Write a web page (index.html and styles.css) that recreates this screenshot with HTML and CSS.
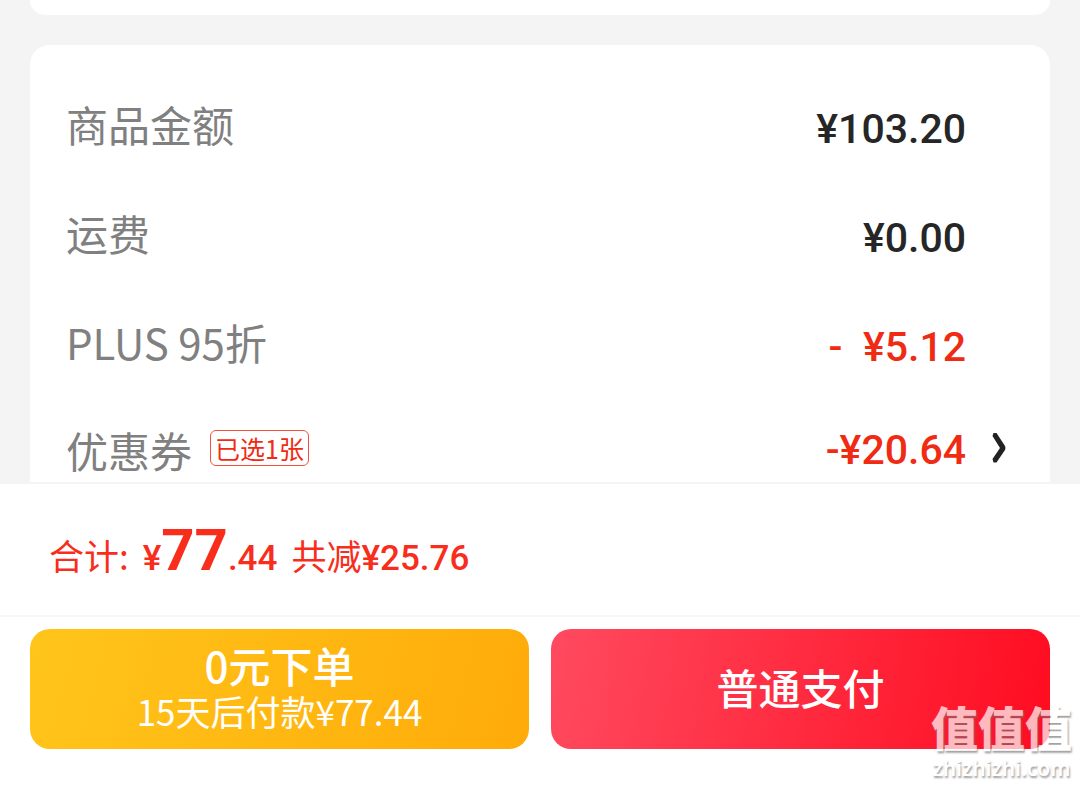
FILE: index.html
```html
<!DOCTYPE html>
<html lang="zh-CN">
<head>
<meta charset="utf-8">
<meta name="viewport" content="width=device-width, initial-scale=1">
<title>确认订单</title>
<link rel="stylesheet" href="styles.css">
</head>
<body>
<main class="content">
  <div class="card card-previous"></div>
  <section class="card summary">
    <div class="row">
      <span class="label">商品金额</span>
      <span class="amount">¥103.20</span>
    </div>
    <div class="row">
      <span class="label">运费</span>
      <span class="amount">¥0.00</span>
    </div>
    <div class="row">
      <span class="label">PLUS 95折</span>
      <span class="amount discount">- &nbsp;¥5.12</span>
    </div>
    <button class="row coupon" type="button">
      <span class="label">优惠券<span class="tag">已选1张</span></span>
      <span class="amount discount">-¥20.64</span>
      <svg class="chevron" width="16" height="32" viewBox="0 0 16 32" aria-hidden="true"><path d="M3.500 1H6.500L15 14Q16 16 15 18L6.500 30.500H3.500L2.500 27L10 16L2.500 4Z" fill="#222"/></svg>
    </button>
  </section>
</main>
<footer class="checkout">
  <p class="total">
    <span class="caption">合计:</span>
    <span class="price"><span class="minor">¥</span><span class="major">77</span><span class="minor">.44</span></span>
    <span class="caption">共减<span class="minor">¥25.76</span></span>
  </p>
  <div class="actions">
    <button class="action later" type="button"><span class="title">0元下单</span><span class="subtitle">15天后付款¥77.44</span></button>
    <button class="action pay" type="button"><span class="title">普通支付</span></button>
  </div>
</footer>
<div class="watermark"><span class="watermark-name">值值值</span><span class="watermark-site">zhizhizhi.com</span></div>
</body>
</html>
```
FILE: styles.css
```css
* { box-sizing: border-box; }
body {
  margin: 0;
  min-height: 100vh;
  position: relative;
  display: flex;
  flex-direction: column;
  background: #fff;
  font-family: "Noto Sans CJK SC", sans-serif;
}
button { border: 0; margin: 0; padding: 0; background: none; font: inherit; cursor: pointer; }
.content {
  display: flex;
  flex-direction: column;
  gap: 30px;
  padding: 0 30px;
  background: #f4f4f4;
}
.card { background: #fff; border-radius: 20px; }
.card-previous { padding-top: 15px; border-radius: 0 0 20px 20px; }
.summary {
  display: flex;
  flex-direction: column;
  gap: 49px;
  padding: 52px 44px 2px 36px;
  border-radius: 20px 20px 0 0;
}
.row {
  display: grid;
  grid-template-columns: 1fr auto 40px;
  align-items: center;
}
.coupon { margin-top: -4px; text-align: left; }
.label {
  display: flex;
  align-items: center;
  gap: 18px;
  padding-bottom: 6px;
  font-size: 42px;
  line-height: 54px;
  color: #808080;
}
.coupon .label { padding-bottom: 0; }
.amount {
  padding-top: 4px;
  font-family: Roboto, sans-serif;
  font-size: 41px;
  font-weight: 500;
  line-height: 56px;
  color: #262626;
}
.coupon .amount { padding-top: 0; }
.coupon { min-height: 60px; }
.discount { color: #f02b14; }
.tag {
  margin-bottom: 4px;
  padding: 0 4px;
  border: 1px solid #f5513f;
  border-radius: 6px;
  font-size: 25px;
  line-height: 34px;
  color: #f02b14;
}
.chevron { justify-self: end; margin-bottom: 4px; }
.checkout { border-top: 2px solid #f4f4f4; }
.total {
  display: flex;
  align-items: baseline;
  gap: 14px;
  margin: 0;
  padding: 36px 49px 22px;
  line-height: 60px;
  color: #f92d1c;
}
.caption { font-size: 35px; }
.minor { font-family: Roboto, sans-serif; font-size: 35px; font-weight: 500; }
.major { font-family: Roboto, sans-serif; font-size: 58px; font-weight: 700; }
.actions {
  display: grid;
  grid-template-columns: 1fr 1fr;
  gap: 22px;
  padding: 12px 30px 36px;
  border-top: 2px solid #f7f7f7;
}
.action {
  display: flex;
  flex-direction: column;
  align-items: center;
  justify-content: center;
  min-height: 120px;
  padding-bottom: 4px;
  border-radius: 20px;
  color: #fff;
}
.later { background: linear-gradient(105deg, #ffc51b, #ffab09); }
.pay { background: linear-gradient(100deg, #ff4a5f, #ff0c20); }
.title { font-size: 42px; font-weight: 500; line-height: 48px; }
.subtitle { font-size: 35px; line-height: 44px; }
.watermark {
  position: absolute;
  right: 8px;
  bottom: 3px;
  display: flex;
  flex-direction: column;
  align-items: center;
  color: #fff;
  text-shadow: 1px 2px 2px #777;
  opacity: 0.7;
  pointer-events: none;
}
.watermark-name { font-size: 47px; font-weight: 900; line-height: 54px; }
.watermark-site { font-family: "Noto Sans", sans-serif; font-size: 21px; font-weight: 600; line-height: 30px; }
```
